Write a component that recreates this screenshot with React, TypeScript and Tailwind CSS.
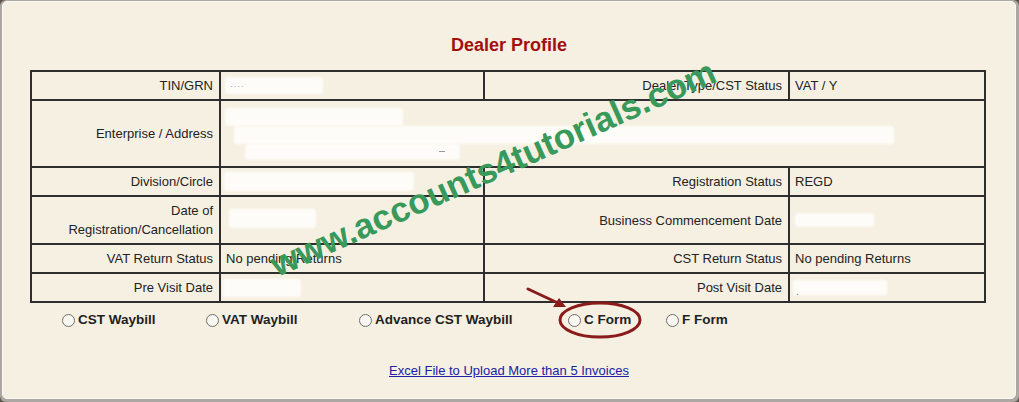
const labelCls = "text-right pr-[6px] pl-[5px] align-middle";
const valueCls = "text-left pl-[5px] pr-[5px] align-middle";
const cellBorder = "border-2 border-[#2e2e2e]";

// blurred white patch, used where values were blanked out in the screenshot
const Blank = ({ w, h, ml = 0, mt = 0 }: { w: number; h: number; ml?: number; mt?: number }) => (
  <div
    className="rounded-[3px] bg-[#fdfcf8] blur-[1px]"
    style={{ width: w, height: h, marginLeft: ml, marginTop: mt }}
  />
);

const Radio = ({ label, width }: { label: string; width?: string }) => (
  <div className={`flex items-center gap-[3px] ${width ?? ""}`}>
    <span className="inline-block h-[13px] w-[13px] rounded-full border border-[#6e6e6e] bg-[#f9f7f2]" />
    <span className="text-[13.5px] font-bold leading-[20px] text-[#1f1f1f]">{label}</span>
  </div>
);

export default function App() {
  return (
    <div
      className="relative h-[402px] w-[1019px] overflow-hidden bg-[#5b544f]"
      style={{ fontFamily: '"Liberation Sans", Arial, sans-serif' }}
    >
      <div className="h-full rounded-[6px] bg-[#aca7a2] pt-[1px] pl-[2px] pr-[3px] pb-[3px]">
        <div className="h-full rounded-[5px] border border-[#fcfaf4] bg-[#f6f0e2]">
          {/* Title */}
          <div className="pt-[33px] text-center text-[18px] font-bold leading-[21px] text-[#a10f0f]">
            Dealer Profile
          </div>

          {/* Profile table */}
          <table className="ml-[27px] mt-[14px] w-[954px] table-fixed border-collapse text-[13px] leading-[19px] text-[#222]">
            <colgroup>
              <col className="w-[189px]" />
              <col className="w-[264px]" />
              <col className="w-[305px]" />
              <col className="w-[196px]" />
            </colgroup>
            <tbody>
              <tr className="h-[29px]">
                <td className={`${cellBorder} ${labelCls}`}>TIN/GRN</td>
                <td className={`${cellBorder} ${valueCls}`}>
                  <div className="relative">
                    <Blank w={98} h={17} ml={-1} />
                    <span className="absolute left-[4px] top-[0px] text-[8px] tracking-[1px] text-[#888]">····</span>
                  </div>
                </td>
                <td className={`${cellBorder} ${labelCls}`}>Dealer Type/CST Status</td>
                <td className={`${cellBorder} ${valueCls}`}>VAT / Y</td>
              </tr>
              <tr className="h-[67px]">
                <td className={`${cellBorder} ${labelCls}`}>Enterprise / Address</td>
                <td colSpan={3} className={`${cellBorder} ${valueCls}`}>
                  <div className="flex flex-col">
                    <Blank w={178} h={18} ml={-1} />
                    <Blank w={660} h={18} ml={8} />
                    <div className="relative">
                      <Blank w={215} h={16} ml={19} />
                      <span className="absolute left-[213px] top-[7px] h-[1px] w-[6px] bg-[#999]" />
                    </div>
                  </div>
                </td>
              </tr>
              <tr className="h-[29px]">
                <td className={`${cellBorder} ${labelCls}`}>Division/Circle</td>
                <td className={`${cellBorder} ${valueCls}`}>
                  <Blank w={190} h={19} ml={-2} />
                </td>
                <td className={`${cellBorder} ${labelCls}`}>Registration Status</td>
                <td className={`${cellBorder} ${valueCls}`}>REGD</td>
              </tr>
              <tr className="h-[48px]">
                <td className={`${cellBorder} ${labelCls}`}>
                  Date of
                  <br />
                  Registration/Cancellation
                </td>
                <td className={`${cellBorder} ${valueCls}`}>
                  <Blank w={87} h={19} ml={3} mt={-3} />
                </td>
                <td className={`${cellBorder} ${labelCls}`}>Business Commencement Date</td>
                <td className={`${cellBorder} ${valueCls}`}>
                  <Blank w={79} h={14} ml={0} />
                </td>
              </tr>
              <tr className="h-[29px]">
                <td className={`${cellBorder} ${labelCls}`}>VAT Return Status</td>
                <td className={`${cellBorder} ${valueCls}`}>No pending Returns</td>
                <td className={`${cellBorder} ${labelCls}`}>CST Return Status</td>
                <td className={`${cellBorder} ${valueCls}`}>No pending Returns</td>
              </tr>
              <tr className="h-[29px]">
                <td className={`${cellBorder} ${labelCls}`}>Pre Visit Date</td>
                <td className={`${cellBorder} ${valueCls}`}>
                  <Blank w={78} h={18} ml={-3} />
                </td>
                <td className={`${cellBorder} ${labelCls}`}>Post Visit Date</td>
                <td className={`${cellBorder} ${valueCls}`}>
                  <div className="relative">
                    <Blank w={94} h={15} ml={-2} />
                    <span className="absolute left-[1px] top-[2px] text-[11px] text-[#777]">.</span>
                  </div>
                </td>
              </tr>
            </tbody>
          </table>

          {/* Waybill / form options */}
          <div className="mt-[7px] flex h-[20px] items-center pl-[59px]">
            <Radio label="CST Waybill" width="w-[144px]" />
            <Radio label="VAT Waybill" width="w-[153px]" />
            <Radio label="Advance CST Waybill" width="w-[209px]" />
            <Radio label="C Form" width="w-[98px]" />
            <Radio label="F Form" />
          </div>

          <div className="mt-[33px] text-center text-[13px] leading-[16px]">
            <a href="#" className="text-[#2020a8] underline">
              Excel File to Upload More than 5 Invoices
            </a>
          </div>
        </div>
      </div>

      {/* watermark */}
      <div className="pointer-events-none absolute left-[493px] top-[168px] -translate-x-1/2 -translate-y-1/2 -rotate-[24deg] whitespace-nowrap text-[35px] font-bold leading-[40px] text-[#39995a]">
        www.accounts4tutorials.com
      </div>

      {/* annotation: arrow and circle around C Form */}
      <svg className="pointer-events-none absolute left-0 top-0" width="1019" height="402" viewBox="0 0 1019 402">
        <line x1="528" y1="289" x2="558" y2="303" stroke="#8a1b1b" strokeWidth="3" strokeLinecap="round" />
        <path d="M566 307 L553 307 L559 298 Z" fill="#8a1b1b" />
        <ellipse cx="600" cy="320" rx="40" ry="17" fill="none" stroke="#8a1b1b" strokeWidth="3" />
      </svg>
    </div>
  );
}
